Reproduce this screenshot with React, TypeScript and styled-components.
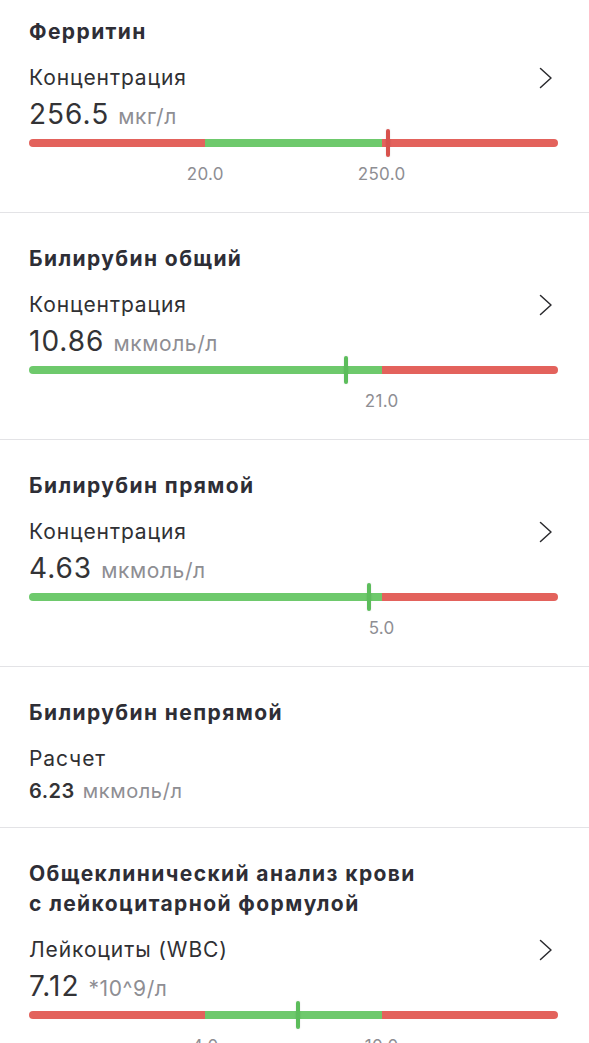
import styled, { createGlobalStyle } from "styled-components";

type Tone = "red" | "green";

interface Segment {
  tone: Tone;
  size: number;
}

interface Analysis {
  title: string;
  label: string;
  value: string;
  unit: string;
  calculated?: boolean;
  segments?: Segment[];
  ticks?: { at: number; text: string }[];
  marker?: number;
}

const COLORS: Record<Tone, string> = {
  red: "#e3625c",
  green: "#6ec96c",
};

const MARKER: Record<Tone, string> = {
  red: "#d8524d",
  green: "#5cbd5b",
};

const analyses: Analysis[] = [
  {
    title: "Ферритин",
    label: "Концентрация",
    value: "256.5",
    unit: "мкг/л",
    segments: [
      { tone: "red", size: 1 },
      { tone: "green", size: 1 },
      { tone: "red", size: 1 },
    ],
    ticks: [
      { at: 1 / 3, text: "20.0" },
      { at: 2 / 3, text: "250.0" },
    ],
    marker: 0.678,
  },
  {
    title: "Билирубин общий",
    label: "Концентрация",
    value: "10.86",
    unit: "мкмоль/л",
    segments: [
      { tone: "green", size: 2 },
      { tone: "red", size: 1 },
    ],
    ticks: [{ at: 2 / 3, text: "21.0" }],
    marker: 0.599,
  },
  {
    title: "Билирубин прямой",
    label: "Концентрация",
    value: "4.63",
    unit: "мкмоль/л",
    segments: [
      { tone: "green", size: 2 },
      { tone: "red", size: 1 },
    ],
    ticks: [{ at: 2 / 3, text: "5.0" }],
    marker: 0.642,
  },
  {
    title: "Билирубин непрямой",
    label: "Расчет",
    value: "6.23",
    unit: "мкмоль/л",
    calculated: true,
  },
  {
    title: "Общеклинический анализ крови\nс лейкоцитарной формулой",
    label: "Лейкоциты (WBC)",
    value: "7.12",
    unit: "*10^9/л",
    segments: [
      { tone: "red", size: 1 },
      { tone: "green", size: 1 },
      { tone: "red", size: 1 },
    ],
    ticks: [
      { at: 1 / 3, text: "4.0" },
      { at: 2 / 3, text: "10.0" },
    ],
    marker: 0.508,
  },
];

function toneAt(segments: Segment[], pos: number): Tone {
  const total = segments.reduce((s, x) => s + x.size, 0);
  let acc = 0;
  for (const seg of segments) {
    acc += seg.size / total;
    if (pos <= acc) return seg.tone;
  }
  return segments[segments.length - 1].tone;
}

export default function App() {
  return (
    <>
      <GlobalStyle />
      <List>
        {analyses.map((a) => (
          <Card key={a.title}>
            <Title>{a.title}</Title>
            <LabelRow>
              <Label>{a.label}</Label>
              {!a.calculated && (
                <Chevron viewBox="0 0 14 22" aria-hidden>
                  <path d="M1.5 1.5 L12 11 L1.5 20.5" />
                </Chevron>
              )}
            </LabelRow>
            <ValueRow $small={a.calculated}>
              <Value $small={a.calculated}>{a.value}</Value>
              <Unit $small={a.calculated}>{a.unit}</Unit>
            </ValueRow>
            {a.segments && (
              <>
                <Bar>
                  {a.segments.map((s, i) => (
                    <BarSegment key={i} $tone={s.tone} style={{ flexGrow: s.size }} />
                  ))}
                  {a.marker !== undefined && (
                    <Marker
                      $tone={toneAt(a.segments, a.marker)}
                      style={{ left: `${a.marker * 100}%` }}
                    />
                  )}
                </Bar>
                <Ticks>
                  {a.ticks?.map((t) => (
                    <Tick key={t.text} style={{ left: `${t.at * 100}%` }}>
                      {t.text}
                    </Tick>
                  ))}
                </Ticks>
              </>
            )}
          </Card>
        ))}
      </List>
    </>
  );
}

const GlobalStyle = createGlobalStyle`
  html, body {
    margin: 0;
    padding: 0;
    background: #ffffff;
  }
  body {
    font-family: Inter, "Noto Sans", sans-serif;
    color: #2f2f33;
    -webkit-font-smoothing: antialiased;
  }
`;

const List = styled.div`
  display: flex;
  flex-direction: column;
  width: 589px;
  overflow: hidden;
`;

const Card = styled.section`
  display: flex;
  flex-direction: column;
  padding: 31px 31px 22px 29px;
  border-bottom: 1px solid #e3e3e6;
  &:first-child {
    padding-top: 17px;
  }
`;

const Title = styled.h2`
  margin: 0;
  font-size: 21px;
  line-height: 30px;
  font-weight: 700;
  letter-spacing: 1.4px;
  color: #2e2e36;
  white-space: pre-line;
`;

const LabelRow = styled.div`
  display: flex;
  align-items: center;
  justify-content: space-between;
  margin-top: 17px;
`;

const Label = styled.span`
  font-size: 21px;
  line-height: 28px;
  letter-spacing: 0.9px;
  color: #303033;
`;

const Chevron = styled.svg`
  width: 14px;
  height: 22px;
  margin-right: 5px;
  fill: none;
  stroke: #2a2a2e;
  stroke-width: 1.5;
  stroke-linecap: round;
  stroke-linejoin: round;
`;

const ValueRow = styled.div<{ $small?: boolean }>`
  display: flex;
  align-items: baseline;
  gap: ${(p) => (p.$small ? "8px" : "9px")};
  margin-top: ${(p) => (p.$small ? "4px" : "5px")};
`;

const Value = styled.span<{ $small?: boolean }>`
  font-size: ${(p) => (p.$small ? "20px" : "28px")};
  line-height: ${(p) => (p.$small ? "28px" : "34px")};
  font-weight: ${(p) => (p.$small ? 600 : 400)};
  letter-spacing: ${(p) => (p.$small ? "0.5px" : "1px")};
  color: #333336;
`;

const Unit = styled.span<{ $small?: boolean }>`
  font-size: ${(p) => (p.$small ? "20px" : "21px")};
  letter-spacing: 0.6px;
  color: #8e8e93;
`;

const Bar = styled.div`
  position: relative;
  display: flex;
  height: 8px;
  margin-top: 8px;
  border-radius: 4px;
  & > div:first-child {
    border-radius: 4px 0 0 4px;
  }
  & > div:nth-last-child(2) {
    border-radius: 0 4px 4px 0;
  }
`;

const BarSegment = styled.div<{ $tone: Tone }>`
  flex-basis: 0;
  background: ${(p) => COLORS[p.$tone]};
`;

const Marker = styled.span<{ $tone: Tone }>`
  position: absolute;
  top: -10px;
  width: 4px;
  height: 28px;
  margin-left: -2px;
  border-radius: 2px;
  background: ${(p) => MARKER[p.$tone]};
  box-shadow: 0 0 2px rgba(0, 0, 0, 0.12);
`;

const Ticks = styled.div`
  position: relative;
  height: 20px;
  margin-top: 17px;
  margin-bottom: 6px;
`;

const Tick = styled.span`
  position: absolute;
  top: 0;
  transform: translateX(-50%);
  font-size: 17px;
  line-height: 20px;
  letter-spacing: 0.3px;
  color: #8e8e93;
`;
